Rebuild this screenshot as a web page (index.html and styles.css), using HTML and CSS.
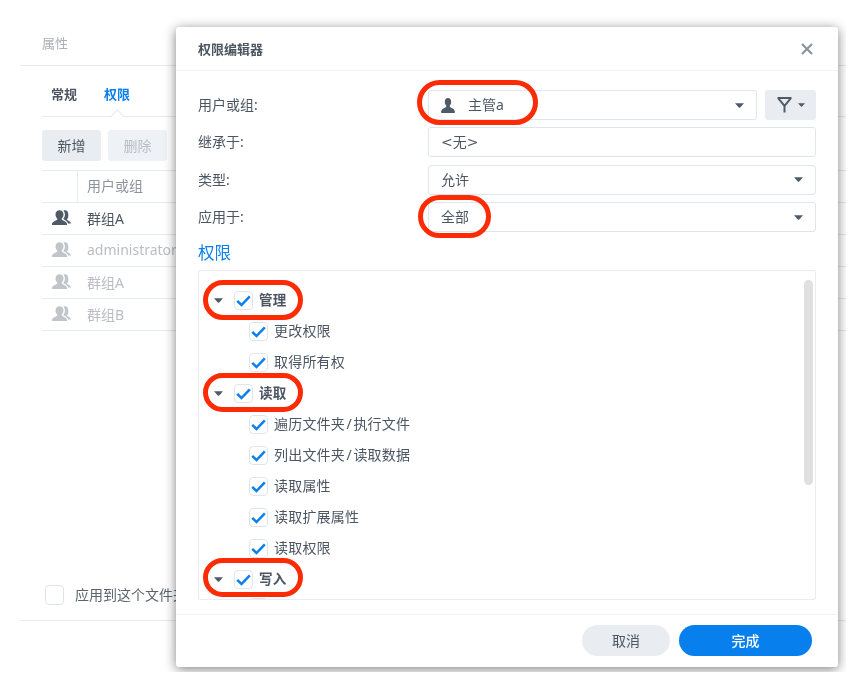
FILE: index.html
```html
<!DOCTYPE html>
<html lang="zh-CN">
<head>
<meta charset="utf-8">
<title>权限编辑器</title>
<link rel="stylesheet" href="styles.css">
</head>
<body>
<svg class="defs" width="0" height="0" aria-hidden="true">
  <symbol id="i-check" viewBox="0 0 19 19"><path d="M3.2 9.800l4.300 4.200 8.300-8.600" fill="none" stroke="#0a80ef" stroke-width="2.500"/></symbol>
  <symbol id="i-group" viewBox="0 0 20 16"><path d="M7.500.3C5 .3 3.500 2 3.500 4.500c0 1.800.7 3.200 1.700 4v1.200C3.500 10.700.8 11.300 0 13.500V15h15v-1.500c-.8-2.200-3.500-2.800-5.200-3.800V8.500c1-.8 1.700-2.200 1.700-4C11.500 2 10 .3 7.500.3z"/><path d="M13 .3c-.6 0-1.200.1-1.600.4 1 1 1.500 2.300 1.500 3.900 0 1.500-.5 3-1.400 4v.7c1.300.6 3.700 1.700 4.600 4.200h3c-.4-1.800-3-3-4.100-3.800V9.300c.8-.8 1.300-2.100 1.300-3.600C16.500 2 15.200.3 13 .3z"/></symbol>
  <symbol id="i-caret" viewBox="0 0 9 5"><path d="M0 .3h9L5.200 4.500q-.7.600-1.400 0z"/></symbol>
</svg>

<div class="screen">
  <section class="panel">
    <h2 class="panel-title">属性</h2>
    <div class="panel-body">
      <nav class="tabs">
        <span class="tab">常规</span>
        <span class="tab tab-active">权限</span>
      </nav>
      <div class="toolbar">
        <button class="tool-btn">新增</button>
        <button class="tool-btn tool-btn-off">删除</button>
      </div>
      <div class="table">
        <div class="t-head"><span class="t-icon-col"></span><span class="t-name-col">用户或组</span></div>
        <div class="t-row"><svg class="t-icon"><use href="#i-group"/></svg><span class="lift">群组A</span></div>
        <div class="t-row t-row-off"><svg class="t-icon"><use href="#i-group"/></svg><span class="lift">administrators</span></div>
        <div class="t-row t-row-off"><svg class="t-icon"><use href="#i-group"/></svg><span class="lift">群组A</span></div>
        <div class="t-row t-row-off"><svg class="t-icon"><use href="#i-group"/></svg><span class="lift">群组B</span></div>
      </div>
    </div>
    <div class="panel-foot">
      <span class="box-empty"></span><span class="foot-label lift">应用到这个文件夹</span>
    </div>
  </section>

  <section class="dialog">
    <header class="d-head">
      <h1 class="d-title">权限编辑器</h1>
      <svg class="d-close" viewBox="0 0 12 12"><path d="M1 1l10 10M11 1L1 11" fill="none" stroke="#8b949c" stroke-width="2.200"/></svg>
    </header>
    <div class="d-body">
      <div class="form">
        <label class="f-label lift">用户或组:</label>
        <div class="f-split">
          <div class="input">
            <svg class="user-icon" viewBox="0 0 14 15"><path d="M7 0C5 0 3.800 1.600 3.800 3.800c0 1.600.5 2.900 1.400 3.700v1.600C3.500 10 1 10.800.2 13v2h13.600v-2c-.8-2.200-3.300-3-5-3.900V7.500c.9-.8 1.400-2.100 1.400-3.700C10.200 1.600 9 0 7 0z"/></svg>
            <span class="input-text lift">主管a</span>
            <svg class="caret"><use href="#i-caret"/></svg>
          </div>
          <button class="filter-btn">
            <svg class="filter-icon" viewBox="0 0 16 17"><path d="M.5 1.100h15M1.400 1.500l6.600 8v7M14.600 1.500L8 9.500" fill="none" stroke="#4f5a65" stroke-width="2.100"/></svg>
            <svg class="caret-small"><use href="#i-caret"/></svg>
          </button>
        </div>
        <label class="f-label lift">继承于:</label>
        <div class="input"><span class="input-text input-wide lift">&lt;无&gt;</span></div>
        <label class="f-label lift">类型:</label>
        <div class="input"><span class="input-text lift">允许</span><svg class="caret"><use href="#i-caret"/></svg></div>
        <label class="f-label lift">应用于:</label>
        <div class="input"><span class="input-text lift">全部</span><svg class="caret"><use href="#i-caret"/></svg></div>
      </div>
      <h3 class="section">权限</h3>
      <div class="tree">
        <div class="scrollbar"></div>
        <div class="node node-group"><svg class="tree-caret"><use href="#i-caret"/></svg><span class="check"><svg><use href="#i-check"/></svg></span><b class="lift">管理</b></div>
        <div class="node"><span class="check"><svg><use href="#i-check"/></svg></span><span class="lift">更改权限</span></div>
        <div class="node"><span class="check"><svg><use href="#i-check"/></svg></span><span class="lift">取得所有权</span></div>
        <div class="node node-group"><svg class="tree-caret"><use href="#i-caret"/></svg><span class="check"><svg><use href="#i-check"/></svg></span><b class="lift">读取</b></div>
        <div class="node"><span class="check"><svg><use href="#i-check"/></svg></span><span class="lift">遍历文件夹<span class="slash">/</span>执行文件</span></div>
        <div class="node"><span class="check"><svg><use href="#i-check"/></svg></span><span class="lift">列出文件夹<span class="slash">/</span>读取数据</span></div>
        <div class="node"><span class="check"><svg><use href="#i-check"/></svg></span><span class="lift">读取属性</span></div>
        <div class="node"><span class="check"><svg><use href="#i-check"/></svg></span><span class="lift">读取扩展属性</span></div>
        <div class="node"><span class="check"><svg><use href="#i-check"/></svg></span><span class="lift">读取权限</span></div>
        <div class="node node-group"><svg class="tree-caret"><use href="#i-caret"/></svg><span class="check"><svg><use href="#i-check"/></svg></span><b class="lift">写入</b></div>
        <div class="node node-clipped"><span class="check"></span></div>
      </div>
    </div>
    <footer class="d-foot">
      <button class="btn btn-cancel">取消</button>
      <button class="btn btn-primary">完成</button>
    </footer>
  </section>

  <i class="mark mark-user"></i>
  <i class="mark mark-apply"></i>
  <i class="mark mark-admin"></i>
  <i class="mark mark-read"></i>
  <i class="mark mark-write"></i>
</div>
</body>
</html>
```
FILE: styles.css
```css
* { box-sizing: border-box; }
html, body { margin: 0; padding: 0; background: #fff; }
body {
  font-family: "Noto Sans", "Noto Sans CJK SC", sans-serif;
  font-size: 14px;
  color: #4c5662;
}
.defs { position: absolute; }
.lift { padding-bottom: 2px; }
.screen {
  position: relative;
  width: 846px;
  height: 672px;
  overflow: hidden;
  background: #fff;
  filter: blur(0.45px);
}

/* background panel */
.panel {
  margin-left: 20px;
  height: 621px;
  display: flex;
  flex-direction: column;
  border-bottom: 1px solid #e6ebf1;
}
.panel-title {
  margin: 0;
  height: 46px;
  padding: 12px 0 0 22px;
  margin-top: 20px;
  border-bottom: 1px solid #e6ebf1;
  font-size: 13px;
  line-height: 22px;
  font-weight: 400;
  color: #a9afb6;
}
.panel-body { flex: 1; padding-left: 22px; }
.tabs {
  height: 51px;
  padding: 17px 0 0 9px;
  display: flex;
  gap: 27px;
  border-bottom: 1px solid #e6ebf1;
}
.tab { font-size: 13px; font-weight: 700; line-height: 22px; color: #4c5662; }
.tab-active { color: #0a80ef; position: relative; height: 33px; }
.tab-active::after {
  content: "";
  position: absolute;
  left: 9px;
  bottom: -4px;
  width: 8px;
  height: 8px;
  background: #fff;
  border-top: 1px solid #e6ebf1;
  border-left: 1px solid #e6ebf1;
  transform: rotate(45deg);
}
.toolbar { display: flex; gap: 7px; padding-top: 13px; height: 53px; }
.tool-btn {
  width: 59px;
  height: 31px;
  padding: 0 0 2px;
  border: 0;
  border-radius: 3px;
  background: #e9edf2;
  color: #4c5662;
  font: inherit;
}
.tool-btn-off { color: #b8bec5; background: #eef1f5; }
.table { border-top: 1px solid #e6ebf1; }
.t-head { display: flex; height: 32px; border-bottom: 1px solid #e6ebf1; color: #8d949c; line-height: 29px; }
.t-icon-col { width: 36px; border-right: 1px solid #e6ebf1; }
.t-name-col { padding-left: 9px; }
.t-row {
  display: flex;
  align-items: center;
  height: 32px;
  border-bottom: 1px solid #e6ebf1;
  padding-left: 10px;
  white-space: nowrap;
  fill: #4f5a66;
}
.t-row-off { color: #b9bec4; fill: #c0c5ca; }
.t-icon { width: 20px; height: 16px; margin-right: 15px; margin-bottom: 2px; }
.panel-foot { height: 48px; padding: 0 0 2px 25px; display: flex; align-items: center; gap: 11px; }
.box-empty { width: 19px; height: 20px; border: 1px solid #dfe4ea; border-radius: 4px; }
.foot-label { white-space: nowrap; color: #5b646e; }

/* dialog */
.dialog {
  position: absolute;
  left: 176px;
  top: 27px;
  width: 662px;
  height: 640px;
  display: flex;
  flex-direction: column;
  background: #fff;
  border-radius: 3px;
  box-shadow: 0 2px 12px rgba(0, 0, 0, 0.5);
}
.d-head {
  height: 44px;
  flex: none;
  display: flex;
  align-items: center;
  justify-content: space-between;
  padding: 0 25px 0 22px;
  border-bottom: 1px solid #eef1f5;
}
.d-title { margin: 0; font-size: 13px; font-weight: 700; color: #4c5662; padding-bottom: 1px; }
.d-close { width: 12px; height: 12px; }
.d-body { flex: 1; min-height: 0; padding: 19px 22px 0; }
.form {
  display: grid;
  grid-template-columns: 230px 388px;
  grid-auto-rows: 30px;
  row-gap: 7.4px;
  align-items: center;
}
.f-label { color: #4c5662; }
.f-split { display: flex; gap: 8px; height: 30px; }
.input {
  flex: 1;
  height: 30px;
  display: flex;
  align-items: center;
  border: 1px solid #dfe5ec;
  border-radius: 3px;
  padding: 0 12px;
  fill: #4f5a66;
}
.input-text { flex: 1; color: #4c5662; }
.input-wide { font-family: "DejaVu Sans", "Noto Sans CJK SC", sans-serif; }
.user-icon { width: 14px; height: 15px; margin-right: 13px; }
.caret { width: 9px; height: 5px; fill: #4f5a66; }
.filter-btn {
  width: 51px;
  height: 30px;
  flex: none;
  padding: 0 0 0 12px;
  border: 0;
  border-radius: 3px;
  background: #e9edf2;
  display: flex;
  align-items: center;
  gap: 6px;
  fill: #4f5a66;
}
.filter-icon { width: 15px; height: 16px; }
.caret-small { width: 7px; height: 4px; }
.section {
  margin: 0;
  height: 38px;
  padding-top: 10px;
  font-size: 16.500px;
  line-height: 22px;
  font-weight: 400;
  color: #0a80ef;
}
.tree {
  position: relative;
  height: 330px;
  overflow: hidden;
  border: 1px solid #e9edf2;
  border-radius: 2px;
  padding-top: 13.5px;
}
.scrollbar {
  position: absolute;
  right: 2px;
  top: 9px;
  width: 9px;
  height: 205px;
  border-radius: 5px;
  background: #e0e0e0;
}
.node {
  display: flex;
  align-items: center;
  height: 31px;
  padding-left: 50px;
  gap: 6px;
  white-space: nowrap;
  color: #4c5662;
  letter-spacing: 0.2px;
}
.node-group { padding-left: 15px; fill: #4f5a66; }
.node-clipped { margin-top: -3px; }
.node b { font-weight: 700; font-size: 13.500px; }
.slash { margin: 0 1.500px; }
.tree-caret { width: 9px; height: 5px; margin-right: 5px; }
.check {
  width: 19px;
  height: 19px;
  flex: none;
  border: 1px solid #dfe5ec;
  border-radius: 4px;
  position: relative;
}
.check svg { position: absolute; left: -1px; top: -1px; width: 19px; height: 19px; }
.d-foot {
  flex: none;
  height: 53px;
  display: flex;
  justify-content: flex-end;
  align-items: flex-start;
  gap: 9px;
  padding: 10px 26px 0 0;
  border-top: 1px solid #eef1f5;
}
.btn {
  height: 31px;
  padding: 0 0 2px;
  border: 0;
  border-radius: 16px;
  font: inherit;
}
.btn-cancel { width: 88px; background: #e9edf2; color: #4c5662; }
.btn-primary { width: 133px; background: #0780ee; color: #fff; font-weight: 500; }

/* red annotation pills */
.mark {
  position: absolute;
  border: 5.500px solid #fb2b05;
  border-radius: 24px;
}
.mark-user { left: 417px; top: 80px; width: 121px; height: 45px; }
.mark-apply { left: 418px; top: 195px; width: 73px; height: 43px; }
.mark-admin { left: 203px; top: 280px; width: 100px; height: 40px; }
.mark-read { left: 203px; top: 373px; width: 100px; height: 39px; }
.mark-write { left: 203px; top: 558px; width: 100px; height: 39px; }
```
